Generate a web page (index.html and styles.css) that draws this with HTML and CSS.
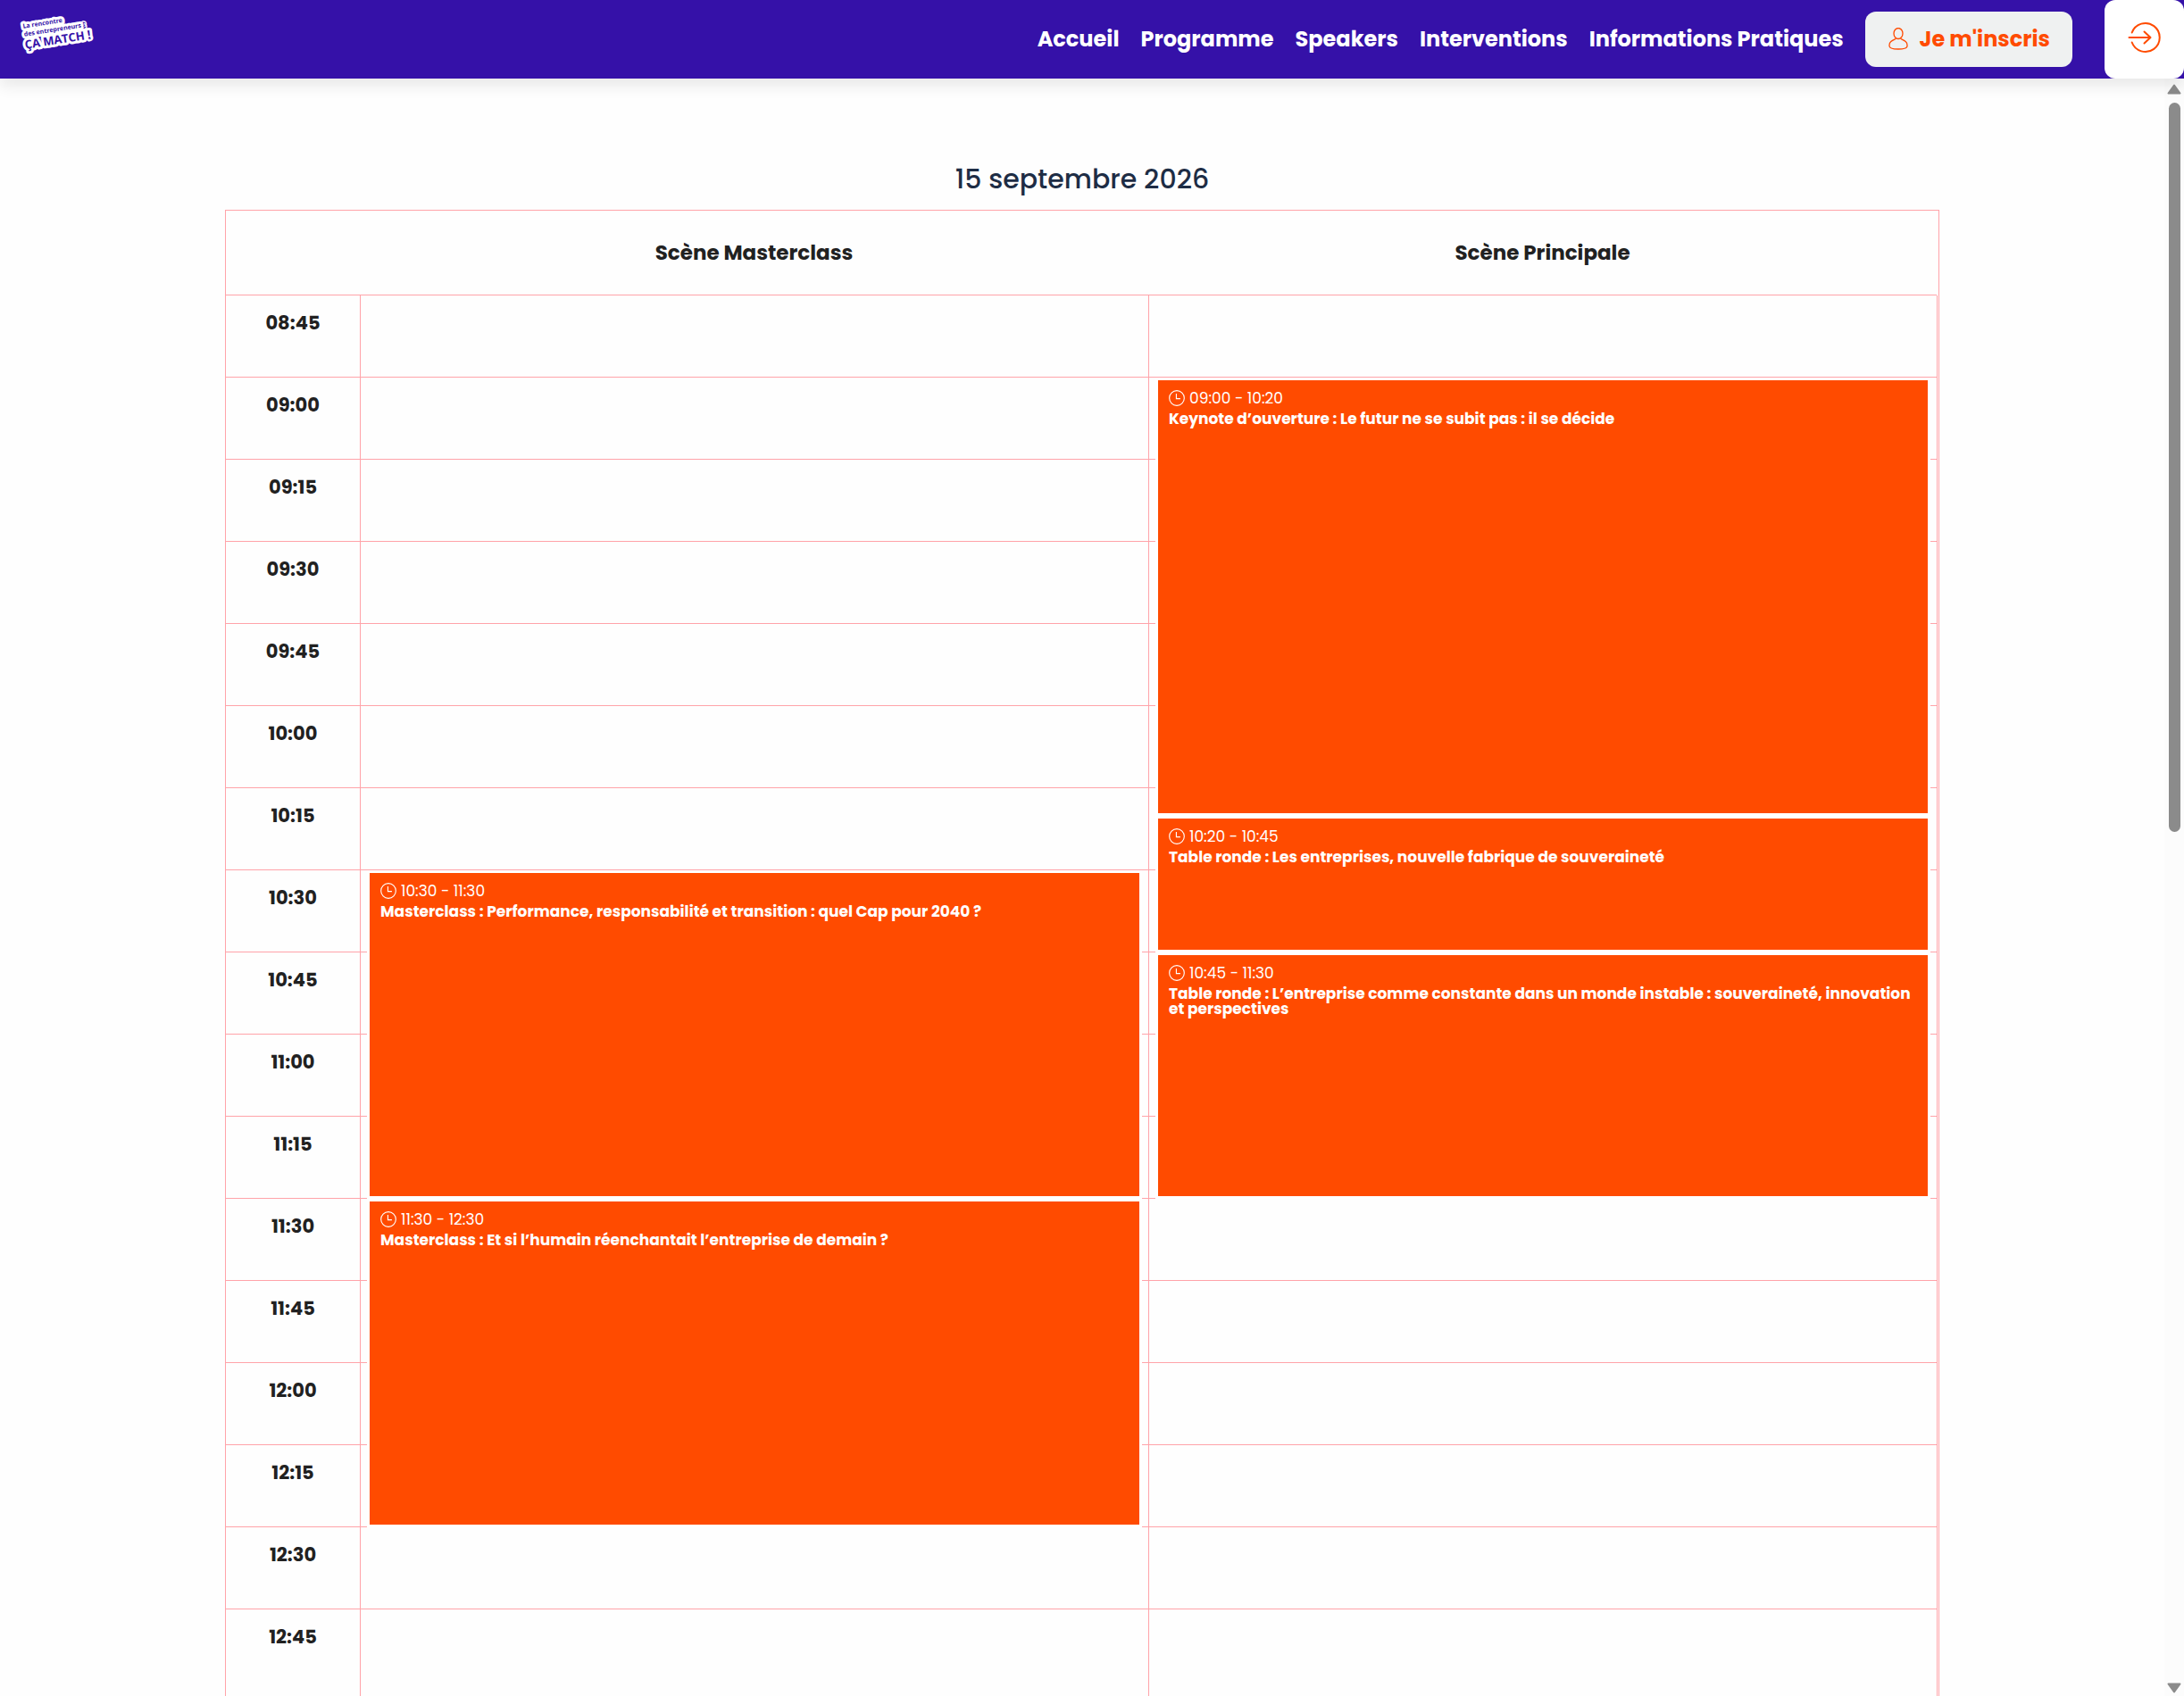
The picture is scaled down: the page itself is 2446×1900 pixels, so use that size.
FILE: index.html
```html
<!DOCTYPE html>
<html lang="fr">
<head>
<meta charset="utf-8">
<meta name="viewport" content="width=device-width, initial-scale=1">
<title>Programme – Ça match !</title>
<link rel="stylesheet" href="styles.css">
</head>
<body>
<svg class="sprite" aria-hidden="true">
  <symbol id="clock" viewBox="0 0 16 16">
    <circle cx="8" cy="8" r="7.4"/><path d="M7.5 3.5V8.5H11.5"/>
  </symbol>
</svg>
<header class="topbar">
  <a class="logo" href="#" aria-label="La rencontre des entrepreneurs : Ça match !">
    <svg width="90" height="52" viewBox="20 14 90 52" role="img">
      <g class="logo-text" transform="rotate(-9 28 58)">
        <g class="logo-outline">
          <text class="logo-small" x="31" y="32">La rencontre</text>
          <text class="logo-small" x="31" y="41">des entrepreneurs :</text>
          <text class="logo-big" x="30" y="55">ÇA MATCH !</text>
        </g>
        <text class="logo-small" x="31" y="32">La rencontre</text>
        <text class="logo-small" x="31" y="41">des entrepreneurs :</text>
        <text class="logo-big" x="30" y="55">ÇA MATCH !</text>
      </g>
    </svg>
  </a>
  <nav class="menu">
    <a href="#">Accueil</a>
    <a href="#">Programme</a>
    <a href="#">Speakers</a>
    <a href="#">Interventions</a>
    <a href="#">Informations Pratiques</a>
  </nav>
  <button class="signup" type="button">
    <svg class="user" width="22" height="26" viewBox="0 0 22 26" aria-hidden="true">
      <ellipse cx="11" cy="6.500" rx="5" ry="6"/>
      <path d="M8 12.500C4 14.400 1 15.600 1 19.400V20.500C1 23 5.500 24 11 24S21 23 21 20.500V19.400C21 15.600 18 14.400 14 12.500"/>
    </svg>
    <span>Je m'inscris</span>
  </button>
  <button class="login" type="button" aria-label="Se connecter">
    <svg width="38" height="38" viewBox="0 0 38 38" aria-hidden="true">
      <path d="M4.700 13.500A16 16 0 1 1 4.700 24.500M1.500 19H25M18.500 12.500L25.500 19L18.500 25.500"/>
    </svg>
  </button>
</header>
<div class="viewport">
  <main class="page">
    <h1 class="day">15 septembre 2026</h1>
    <div class="schedule">
      <table class="agenda">
        <colgroup><col class="col-time"><col><col></colgroup>
        <thead>
          <tr><td></td><th scope="col">Scène Masterclass</th><th scope="col">Scène Principale</th></tr>
        </thead>
        <tbody>
          <tr><th scope="row">08:45</th><td></td><td></td></tr>
          <tr><th scope="row">09:00</th><td></td><td>
            <article class="event" style="--offset:0;--length:80">
              <p class="when"><svg class="clock"><use href="#clock"/></svg>09:00 - 10:20</p>
              <h2>Keynote d’ouverture : Le futur ne se subit pas : il se décide</h2>
            </article></td></tr>
          <tr><th scope="row">09:15</th><td></td><td></td></tr>
          <tr><th scope="row">09:30</th><td></td><td></td></tr>
          <tr><th scope="row">09:45</th><td></td><td></td></tr>
          <tr><th scope="row">10:00</th><td></td><td></td></tr>
          <tr><th scope="row">10:15</th><td></td><td>
            <article class="event" style="--offset:5;--length:25">
              <p class="when"><svg class="clock"><use href="#clock"/></svg>10:20 - 10:45</p>
              <h2>Table ronde : Les entreprises, nouvelle fabrique de souveraineté</h2>
            </article></td></tr>
          <tr><th scope="row">10:30</th><td>
            <article class="event" style="--offset:0;--length:60">
              <p class="when"><svg class="clock"><use href="#clock"/></svg>10:30 - 11:30</p>
              <h2>Masterclass : Performance, responsabilité et transition : quel Cap pour 2040 ?</h2>
            </article></td><td></td></tr>
          <tr><th scope="row">10:45</th><td></td><td>
            <article class="event" style="--offset:0;--length:45">
              <p class="when"><svg class="clock"><use href="#clock"/></svg>10:45 - 11:30</p>
              <h2>Table ronde : L’entreprise comme constante dans un monde instable : souveraineté, innovation et perspectives</h2>
            </article></td></tr>
          <tr><th scope="row">11:00</th><td></td><td></td></tr>
          <tr><th scope="row">11:15</th><td></td><td></td></tr>
          <tr><th scope="row">11:30</th><td>
            <article class="event" style="--offset:0;--length:60">
              <p class="when"><svg class="clock"><use href="#clock"/></svg>11:30 - 12:30</p>
              <h2>Masterclass : Et si l’humain réenchantait l’entreprise de demain ?</h2>
            </article></td><td></td></tr>
          <tr><th scope="row">11:45</th><td></td><td></td></tr>
          <tr><th scope="row">12:00</th><td></td><td></td></tr>
          <tr><th scope="row">12:15</th><td></td><td></td></tr>
          <tr><th scope="row">12:30</th><td></td><td></td></tr>
          <tr class="last"><th scope="row">12:45</th><td></td><td></td></tr>
        </tbody>
      </table>
    </div>
  </main>
  <div class="scrollbar" aria-hidden="true">
    <svg width="16" height="12" viewBox="0 0 16 12"><path d="M8 1.500L14.500 10.500H1.500Z"/></svg>
    <div class="track"><div class="thumb"></div></div>
    <svg width="16" height="12" viewBox="0 0 16 12"><path d="M8 10.500L14.500 1.500H1.500Z"/></svg>
  </div>
</div>
</body>
</html>
```

FILE: styles.css
```css
:root {
  --purple: #3511a8;
  --orange: #ff4b00;
  --line: #ffa3a9;
  --slot: 92px;
}

* { box-sizing: border-box; }

body {
  margin: 0;
  height: 100vh;
  display: flex;
  flex-direction: column;
  overflow: hidden;
  background: #fefefe;
  color: #212121;
  font-family: Poppins, Inter, "Open Sans", sans-serif;
}

.sprite { display: none; }

button {
  font: inherit;
  border: 0;
  padding: 0;
  cursor: pointer;
}

.topbar {
  position: relative;
  z-index: 2;
  flex: none;
  height: 88px;
  display: flex;
  align-items: center;
  padding-left: 19px;
  background: var(--purple);
  box-shadow: 0 8px 16px rgba(0, 0, 0, .09);
  font-size: 24px;
  line-height: 32px;
  font-weight: 700;
}

.logo {
  align-self: flex-start;
  margin-top: 14px;
  line-height: 0;
}

.logo-text {
  font-family: "Open Sans", sans-serif;
  font-weight: 700;
  fill: var(--purple);
}

.logo-outline {
  fill: #fff;
  stroke: #fff;
  stroke-width: 6px;
  stroke-linejoin: round;
}

.logo-small { font-size: 7px; }
.logo-big { font-size: 13px; }

.menu {
  display: flex;
  gap: 24px;
  margin-left: auto;
}

.menu a {
  color: #fff;
  text-decoration: none;
}

.signup {
  display: flex;
  align-items: center;
  gap: 13px;
  height: 62px;
  margin: 0 36px 0 24px;
  padding: 0 25px 0 26px;
  border-radius: 12px;
  background: #eff1f1;
  color: var(--orange);
}

.signup svg,
.login svg {
  fill: none;
  stroke: var(--orange);
  stroke-linecap: round;
  stroke-linejoin: round;
}

.signup svg { stroke-width: 1.3px; }
.login svg { stroke-width: 2px; }

.login {
  display: grid;
  place-items: center;
  width: 89px;
  height: 88px;
  padding-bottom: 4px;
  border-radius: 12px;
  background: #fff;
}

.viewport {
  flex: 1;
  min-height: 0;
  display: flex;
}

.page {
  flex: 1;
  overflow: hidden;
  padding: 89px 24px 0;
}

.day {
  margin: 0 0 10px;
  color: #1e2d45;
  font-size: 30px;
  line-height: 48px;
  font-weight: 500;
  text-align: center;
}

.schedule {
  max-width: 1920px;
  margin: 0 auto;
  padding-right: 1px;
  border: 1px solid var(--line);
}

.agenda {
  width: 100%;
  table-layout: fixed;
  border-collapse: separate;
  border-spacing: 0;
  border-right: 1px solid transparent;
  font-size: 23px;
  line-height: 32px;
}

.col-time { width: 150px; }

.agenda td,
.agenda th {
  padding: 0;
  border-bottom: 1px solid var(--line);
}

.agenda thead th {
  height: 95px;
  font-weight: 700;
}

.agenda tbody th {
  height: var(--slot);
  padding-top: 15px;
  vertical-align: top;
  font-size: 21px;
  font-weight: 700;
}

.agenda tbody td {
  position: relative;
  border-left: 1px solid var(--line);
}

.agenda tbody td:last-child { box-shadow: 1px 0 0 var(--line); }

.agenda .last th,
.agenda .last td {
  height: 120px;
  border-bottom: 0;
}

.event {
  position: absolute;
  z-index: 1;
  left: 7px;
  right: 7px;
  top: calc(var(--offset) / 15 * var(--slot));
  height: calc(var(--length) / 15 * var(--slot));
  padding: 9px 12px;
  border: 3px solid #fff;
  background: var(--orange);
  background-clip: padding-box;
  color: #fff;
}

.when {
  display: flex;
  align-items: center;
  gap: 5px;
  margin: 0;
  font-size: 17px;
  line-height: 22px;
}

.clock {
  width: 18px;
  height: 18px;
  fill: none;
  stroke: #fff;
  stroke-width: 1px;
}

.event h2 {
  margin: 4px 0 0;
  font-size: 17px;
  line-height: 17px;
  font-weight: 700;
}

.scrollbar {
  width: 22px;
  display: flex;
  flex-direction: column;
  align-items: center;
  padding: 6px 0 3px;
  background: #fcfcfc;
}

.scrollbar svg {
  fill: #8b8b8b;
  stroke: #8b8b8b;
  stroke-width: 2px;
  stroke-linejoin: round;
}

.track {
  flex: 1;
  padding: 9px 0;
}

.thumb {
  width: 13px;
  height: 46.4%;
  border-radius: 7px;
  background: #8b8b8b;
}
```
